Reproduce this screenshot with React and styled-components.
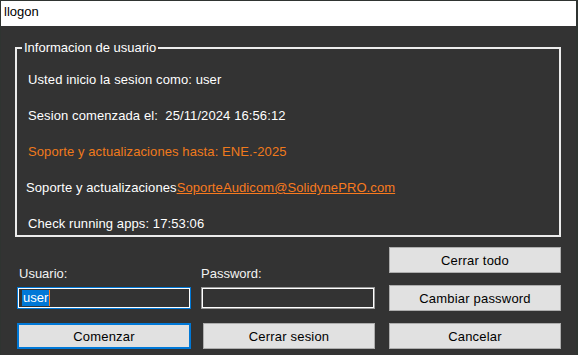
import React from 'react';
import styled, { createGlobalStyle } from 'styled-components';

const GlobalStyle = createGlobalStyle`
  html, body {
    margin: 0;
    padding: 0;
    background: #2f3431;
    overflow: hidden;
  }
  body {
    font-family: "Liberation Sans", Arial, sans-serif;
  }
`;

const Window = styled.div`
  margin: 1px 0 0 1px;
  width: 575px;
  height: 354px;
  background: #333333;
  display: flex;
  flex-direction: column;
`;

const TitleBar = styled.div`
  height: 25px;
  background: #ffffff;
  color: #000;
  font-size: 13px;
  line-height: 15px;
  padding: 3px 0 0 3px;
  box-sizing: border-box;
`;

const Body = styled.div`
  flex: 1;
  padding: 14px 15px 0 14px;
  display: flex;
  flex-direction: column;
`;

const GroupBox = styled.fieldset`
  margin: 0;
  padding: 17px 0 4px 0;
  border: 2px solid #ececec;
  display: flex;
  flex-direction: column;
  gap: 21px;
  min-width: 0;
`;

const Legend = styled.legend`
  margin-left: 5px;
  padding: 0 2px;
  color: #ffffff;
  font-size: 13px;
  line-height: 15px;
`;

const InfoRow = styled.div`
  color: ${p => (p.$accent ? '#f07a1c' : '#ffffff')};
  font-size: 13px;
  line-height: 15px;
  letter-spacing: 0.1px;
  white-space: nowrap;
  padding-left: ${p => 11 + (p.$shift || 0)}px;
`;

const MailLink = styled.a`
  color: #f87a1e;
  text-decoration: underline;
`;

const Controls = styled.div`
  display: flex;
  gap: 12px;
  margin-top: 10px;
  padding-left: 2px;
`;

const Column = styled.div`
  width: ${p => p.$w}px;
  margin-left: ${p => p.$offset || 0}px;
  display: flex;
  flex-direction: column;
  gap: 12px;
`;

const Field = styled.div`
  height: 64px;
  display: flex;
  flex-direction: column;
  justify-content: flex-end;
  padding-bottom: 2px;
  box-sizing: border-box;
  margin-left: ${p => p.$pull || 0}px;
  width: ${p => p.$w}px;
`;

const Label = styled.div`
  color: #f2f2f2;
  font-size: 13px;
  line-height: 15px;
  margin: 0 0 6px ${p => p.$indent || 0}px;
`;

const TextBox = styled.div`
  height: 22px;
  box-sizing: border-box;
  border: 1px solid ${p => (p.$focused ? '#0078d7' : '#9a9a9a')};
  box-shadow: inset 0 0 0 1px #ffffff;
  background: #333333;
  color: #ffffff;
  font-size: 13px;
  line-height: 16px;
  padding: 2px 0 0 4px;
  display: flex;
  align-items: flex-start;
`;

const Selected = styled.span`
  background: #0078d7;
  color: #ffffff;
  padding: 0 1px;
`;

const Caret = styled.span`
  width: 1px;
  height: 16px;
  background: #ff7a1a;
`;

const Button = styled.button`
  height: 26px;
  box-sizing: border-box;
  background: #e1e1e1;
  border: ${p => (p.$primary ? '2px solid #0078d7' : '1px solid #adadad')};
  color: #000000;
  font-family: "Liberation Sans", Arial, sans-serif;
  font-size: 13px;
  letter-spacing: 0.2px;
  padding: 0;
  border-radius: 0;
`;

export default function App() {
  return (
    <>
      <GlobalStyle />
      <Window>
        <TitleBar>llogon</TitleBar>
        <Body>
          <GroupBox>
            <Legend>Informacion de usuario</Legend>
            <InfoRow>Usted inicio la sesion como: user</InfoRow>
            <InfoRow>Sesion comenzada el:&nbsp; 25/11/2024 16:56:12</InfoRow>
            <InfoRow $accent>Soporte y actualizaciones hasta: ENE.-2025</InfoRow>
            <InfoRow $shift={-2}>
              Soporte y actualizaciones
              <MailLink href="#">SoporteAudicom@SolidynePRO.com</MailLink>
            </InfoRow>
            <InfoRow>Check running apps: 17:53:06</InfoRow>
          </GroupBox>
          <Controls>
            <Column $w={174}>
              <Field $w={174}>
                <Label $indent={2}>Usuario:</Label>
                <TextBox $focused>
                  <Selected>user</Selected>
                  <Caret />
                </TextBox>
              </Field>
              <Button $primary>Comenzar</Button>
            </Column>
            <Column $w={172}>
              <Field $w={174} $pull={-2}>
                <Label>Password:</Label>
                <TextBox />
              </Field>
              <Button>Cerrar sesion</Button>
            </Column>
            <Column $w={173} $offset={2}>
              <Button>Cerrar todo</Button>
              <Button>Cambiar password</Button>
              <Button>Cancelar</Button>
            </Column>
          </Controls>
        </Body>
      </Window>
    </>
  );
}
